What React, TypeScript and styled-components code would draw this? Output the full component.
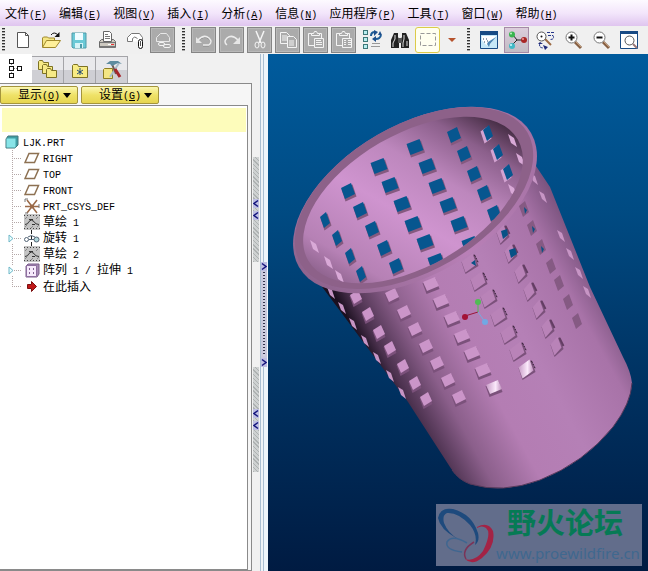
import React from 'react';
import styled, { createGlobalStyle, css } from 'styled-components';

const Global = createGlobalStyle`
  * { box-sizing: border-box; }
  html, body, #root { margin: 0; height: 100%; }
  body {
    font-family: "Noto Sans CJK SC", sans-serif;
    font-size: 12px;
    line-height: 16px;
    color: #000;
    background: #f1f1f1;
    overflow: hidden;
  }
  button { font: inherit; color: inherit; padding: 0; border: 0; background: none; }
  svg { display: block; }
`;

const Page = styled.div`
  display: flex;
  flex-direction: column;
  min-height: 100vh;
`;

/* ---------- text ---------- */

const Latin = styled.span`
  font-family: "Liberation Mono", monospace;
  font-size: 10px;
  white-space: pre;
`;

const Label = ({ text }: { text: string }) => (
  <span>
    {text.split(/([\x20-\x7e]+)/).filter(Boolean).map((part, i) =>
      /^[\x20-\x7e]/.test(part) ? <Latin key={i}>{part}</Latin> : part
    )}
  </span>
);

const Hotkey = ({ text, letter }: { text: string; letter: string }) => (
  <span>
    {text}
    <Latin>(<u>{letter}</u>)</Latin>
  </span>
);

/* ---------- menu ---------- */

const MenuBar = styled.nav`
  display: flex;
  align-items: center;
  gap: 12px;
  height: 26px;
  padding: 2px 5px 0;
  background: linear-gradient(#fdfaff, #f3e6fb 50%, #dfc5ef);
`;

const MenuItem = styled.button`
  flex: none;
  white-space: nowrap;
`;

const menus = [
  ['文件', 'F'], ['编辑', 'E'], ['视图', 'V'], ['插入', 'I'], ['分析', 'A'],
  ['信息', 'N'], ['应用程序', 'P'], ['工具', 'T'], ['窗口', 'W'], ['帮助', 'H'],
];

/* ---------- toolbar ---------- */

const ToolBar = styled.div`
  display: flex;
  align-items: center;
  gap: 3px;
  height: 28px;
  overflow: hidden;
  background: #f0f0f0;
`;

const Grip = styled.span<{ $first?: boolean }>`
  flex: none;
  width: ${(p) => (p.$first ? 7 : 10)}px;
  height: 24px;
  background: repeating-linear-gradient(#333 0 1px, #aaa 1px 2px, #f0f0f0 2px 3px) center / 3px 100% no-repeat;
`;

type Look = 'plain' | 'disabled' | 'pressed' | 'select' | 'arrow';

const looks = {
  plain: css``,
  disabled: css`background: #ababab; border: 1px solid #858585; box-shadow: inset 0 0 0 1px #b9b9b9;`,
  pressed: css`background: linear-gradient(#dccddc, #c2bcc4); border: 1px solid #a58aa6;`,
  select: css`background: #fffff0; border: 1px solid #dccb48; border-radius: 3px;`,
  arrow: css`width: 17px;`,
};

const Tool = styled.button<{ $look: Look }>`
  display: flex;
  flex: none;
  align-items: center;
  justify-content: center;
  width: 25px;
  height: 26px;
  ${(p) => looks[p.$look]}
`;

const Icon = ({ size = 20, h, children }: { size?: number; h?: number; children: React.ReactNode }) => (
  <svg width={size} height={h ?? size} viewBox={`0 0 ${size} ${h ?? size}`} fill="none" aria-hidden="true">
    {children}
  </svg>
);

const NewIcon = () => (
  <Icon><path d="M4.500 2.500h8l3 3v12h-11z" fill="#fff" stroke="#555" /><path d="M12.500 2.500v3h3" stroke="#555" /></Icon>
);
const OpenIcon = () => (
  <Icon>
    <path d="M1.500 17v-9l1-1h4l1 1h6v3" fill="#f4e684" stroke="#a0892c" />
    <path d="M1.500 17.500l4-7h14l-5 7z" fill="#fff09a" stroke="#a0892c" />
    <path d="M10 5q3-4 7 0" stroke="#111" /><path d="M18.500 2v5h-5z" fill="#111" />
  </Icon>
);
const SaveIcon = () => (
  <Icon>
    <path d="M3 3h14v15H4l-1-1z" fill="#6bc9d6" stroke="#4f9ba8" />
    <path d="M6 3h8v7H6z" fill="#eefcff" /><path d="M6 13h8v5H6z" fill="#d6f3f7" /><path d="M11 14h2v4h-2z" fill="#4f9ba8" />
  </Icon>
);
const PrintIcon = () => (
  <Icon>
    <path d="M2.500 11.500l2-2h12l2 2v6h-16z" fill="#cdc9c0" stroke="#6a6a6a" />
    <path d="M6.500 1.500h6l2 2v8h-8z" fill="#fff" stroke="#666" />
    <path d="M8 4.500h3M8 6.500h5M8 8.500h5" stroke="#777" />
    <path d="M3 12.500h15" stroke="#777" /><path d="M3 16h15v2H3z" fill="#777" /><path d="M11 14.500h3" stroke="#fff" /><path d="M14 14.500h3" stroke="#e33" />
  </Icon>
);
const MailIcon = () => (
  <Icon>
    <path d="M2.500 11.500v-4l4-4h8l3 4v4" fill="#fff" stroke="#777" />
    <path d="M2.500 11.500h5v-3q2-3 5 0" stroke="#777" />
    <rect x="13.500" y="9.500" width="4" height="9" rx="2" fill="#fff" stroke="#111" /><path d="M15.500 11v5" stroke="#555" />
  </Icon>
);
const MailLinkIcon = () => (
  <Icon>
    <path d="M3.500 11.500v-4l4-4h6l3 4v4z" stroke="#e8e8e8" />
    <rect x="5.500" y="12.500" width="6" height="3" rx="1.500" stroke="#f4f4f4" />
    <rect x="10.500" y="14.500" width="7" height="3" rx="1.500" stroke="#f4f4f4" />
  </Icon>
);
const UndoIcon = () => (
  <Icon><path d="M4 11q6-6 11-2q4 4 0 7H9" stroke="#888" /><path d="M4 10q6-6 11-2q4 4 0 7H9" stroke="#ececec" strokeWidth="1.500" /><path d="M2 7v6h6z" fill="#e6e6e6" /></Icon>
);
const RedoIcon = () => (
  <Icon><path d="M16 10q-6-6-11-2q-4 4 0 7" stroke="#ececec" strokeWidth="1.500" /><path d="M18 7v7h-7z" fill="#e6e6e6" /></Icon>
);
const CutIcon = () => (
  <Icon><path d="M6 1l5 12M14 1L9 13" stroke="#f4f4f4" strokeWidth="1.500" /><ellipse cx="7" cy="15" rx="2" ry="3" stroke="#f4f4f4" /><ellipse cx="13" cy="15" rx="2" ry="3" stroke="#f4f4f4" /></Icon>
);
const CopyIcon = () => (
  <Icon>
    <path d="M2.500 2.500h6l3 3v8h-9zM4 6h5M4 8h5M4 10h5" stroke="#f4f4f4" />
    <path d="M9.500 6.500h6l3 3v8h-9z" fill="#ababab" stroke="#f4f4f4" /><path d="M11 11h5M11 13h5M11 15h5" stroke="#f4f4f4" />
  </Icon>
);
const PasteIcon = ({ list = false }: { list?: boolean }) => (
  <Icon>
    <path d="M2.500 3.500h13v12h-13z" stroke="#f4f4f4" /><path d="M5.500 5.500v-2h2l1-2h2l1 2h2v2z" fill="#ababab" stroke="#f4f4f4" />
    <path d="M8.500 8.500h9v9h-9z" fill="#ababab" stroke="#f4f4f4" />
    <path d={list ? 'M10 10.500h2M14 10.500h3M10 12.500h2M14 12.500h3M10 14.500h2M14 14.500h3' : 'M10 10.500h5M10 12.500h6M10 14.500h6'} stroke="#f4f4f4" />
  </Icon>
);
const RegenIcon = () => (
  <Icon>
    {[0, 7, 14].map((y) => <rect key={y} x="1.500" y={y + 0.5} width="4" height="4" fill="#b8eef0" stroke="#3d7778" />)}
    <path d="M9 6q0-4 4-4M19 5q-1 4-5 4" stroke="#1d5b96" strokeWidth="2" /><path d="M12 0l4 2-4 4zM14 6v6l-4-3zM16 5h4l-2-4z" fill="#1d4f8c" />
    <path d="M10 13.500h8M9 16.500h9" stroke="#999" />
  </Icon>
);
const FindIcon = () => (
  <Icon>
    <path d="M4 3h4v4l1 2v9H1v-8zM12 3h4l3 7v8h-8V9l1-2z" fill="#222" /><path d="M8 8h4v5H8z" fill="#555" />
    <path d="M5 5v4l-2 4v4M14 5v4l-1 4v4M17 11v5" stroke="#ddd" />
  </Icon>
);
const SelectIcon = () => <Icon><path d="M2.500 3.500h15v12h-15z" stroke="#999" strokeDasharray="4 2" /></Icon>;
const ArrowIcon = () => <Icon size={8}><path d="M0 2h8L4 6z" fill="#b6532c" /></Icon>;
const RedrawIcon = () => (
  <Icon>
    <path d="M1.500 1.500h17v17h-17z" fill="#c6e8f8" stroke="#174a84" /><path d="M1 1h18v4H1z" fill="#174a84" />
    <path d="M3 6h14l-7 10q-4-1-7-6z" fill="#fff" /><path d="M17 7l-6 7-1 3-2-3 1-2z" fill="#4b86b5" />
    <path d="M4 9h1M7 9h1M5 12h1M8 11h1" stroke="#246" />
  </Icon>
);
const SpinIcon = () => (
  <Icon>
    <path d="M6 5l4 5h8M10 10l-5 5" stroke="#222" />
    <circle cx="5" cy="4.500" r="3" fill="#39b54f" /><circle cx="17" cy="10" r="3" fill="#a92626" /><circle cx="5" cy="16" r="3" fill="#41b9c6" />
    <circle cx="4" cy="3.500" r="1" fill="#bff5c4" /><circle cx="16" cy="9" r="1" fill="#ef9b9b" /><circle cx="4" cy="15" r="1" fill="#d0fbff" />
  </Icon>
);
const OrientIcon = () => (
  <Icon>
    <path d="M10 9l6 6" stroke="#9c6b45" strokeWidth="2" /><circle cx="6.500" cy="6.500" r="4.500" fill="#fff" stroke="#555" /><circle cx="6.500" cy="6.500" r="1" fill="#111" />
    <path d="M12 2.500h7M13 5.500h5q2 4-3 4M5 13q-2 5 4 5" stroke="#25358a" strokeDasharray="3 1" /><path d="M8 15l5 2-3 3zM5 12l3 2H3z" fill="#1d2877" />
  </Icon>
);
const Lens = ({ children }: { children?: React.ReactNode }) => (
  <g>
    <path d="M12 12l6 6" stroke="#866044" strokeWidth="3" /><path d="M12 11l6 6" stroke="#c29b78" />
    <circle cx="8.500" cy="7.500" r="5.500" fill="#fff" stroke="#777" />{children}
  </g>
);
const ZoomInIcon = () => <Icon><Lens><path d="M5.500 7.500h6M8.500 4.500v6" stroke="#111" strokeWidth="2" /></Lens></Icon>;
const ZoomOutIcon = () => <Icon><Lens><path d="M5.500 7.500h6" stroke="#111" strokeWidth="2" /></Lens></Icon>;
const RefitIcon = () => (
  <Icon>
    <path d="M1.500 1.500h17v17h-17z" fill="#fff" stroke="#174a84" /><path d="M1 1h18v3H1z" fill="#174a84" />
    <path d="M14 14l4 4" stroke="#977" strokeWidth="2" /><circle cx="10.500" cy="10.500" r="4.500" fill="#fff" stroke="#555" />
  </Icon>
);
const PageIcon = () => <Icon><path d="M1 6h12v11H1z" fill="#aaa" /></Icon>;

const group1: [string, React.ReactNode, Look][] = [
  ['新建', <NewIcon />, 'plain'], ['打开', <OpenIcon />, 'plain'], ['保存', <SaveIcon />, 'plain'],
  ['打印', <PrintIcon />, 'plain'], ['发送邮件', <MailIcon />, 'plain'], ['发送链接', <MailLinkIcon />, 'disabled'],
];
const group2: [string, React.ReactNode, Look][] = [
  ['撤消', <UndoIcon />, 'disabled'], ['重做', <RedoIcon />, 'disabled'], ['剪切', <CutIcon />, 'disabled'],
  ['复制', <CopyIcon />, 'disabled'], ['粘贴', <PasteIcon />, 'disabled'], ['选择性粘贴', <PasteIcon list />, 'disabled'],
  ['再生', <RegenIcon />, 'plain'], ['查找', <FindIcon />, 'plain'], ['选取框', <SelectIcon />, 'select'], ['选取方式', <ArrowIcon />, 'arrow'],
];
const group3: [string, React.ReactNode, Look][] = [
  ['重画', <RedrawIcon />, 'plain'], ['旋转中心', <SpinIcon />, 'pressed'], ['定向模式', <OrientIcon />, 'plain'],
  ['放大', <ZoomInIcon />, 'plain'], ['缩小', <ZoomOutIcon />, 'plain'], ['重新调整', <RefitIcon />, 'plain'], ['视图列表', <PageIcon />, 'plain'],
];

const Tools = ({ items }: { items: [string, React.ReactNode, Look][] }) => (
  <>
    {items.map(([name, icon, look]) => (
      <Tool key={name} aria-label={name} $look={look} disabled={look === 'disabled'}>{icon}</Tool>
    ))}
  </>
);

/* ---------- navigator ---------- */

const Body = styled.div`
  display: flex;
  flex: 1;
  min-height: 0;
`;

const Navigator = styled.aside`
  display: flex;
  flex: none;
  flex-direction: column;
  width: 252px;
`;

const Tabs = styled.div`
  display: flex;
  align-items: flex-end;
  height: 29px;
`;

const Tab = styled.button<{ $active?: boolean }>`
  display: flex;
  align-items: center;
  justify-content: center;
  width: 32px;
  height: ${(p) => (p.$active ? 29 : 27)}px;
  background: ${(p) => (p.$active ? '#fff' : 'linear-gradient(#e9e9ec 50%, #cfcfd4 50%)')};
  border: 1px solid ${(p) => (p.$active ? '#fff' : '#a4a4a8')};
  border-left: 0;
  border-bottom: 0;
`;

const Panel = styled.div`
  display: flex;
  flex: 1;
  flex-direction: column;
  padding: 2px 3px 0 0;
  background: #f6f6f6;
  border: 1px solid #8a8a8a;
  border-left: 0;
`;

const ButtonRow = styled.div`
  display: flex;
  gap: 3px;
  padding-bottom: 1px;
`;

const DropButton = styled.button`
  display: flex;
  align-items: center;
  justify-content: flex-end;
  gap: 3px;
  width: 78px;
  height: 18px;
  padding-right: 6px;
  background: linear-gradient(#fbf7b0, #efe268 50%, #e6d551);
  border: 1px solid #a4953c;
  border-radius: 2px;
`;

const TreeBox = styled.div`
  flex: 1;
  padding: 2px 1px 2px 2px;
  background: #fff;
  border: 1px solid #8a8a8a;
  border-left: 0;
`;

const Banner = styled.div`
  height: 24px;
  background: #fdfcbb;
`;

const Tree = styled.ul`
  margin: 0;
  padding: 2px 0 0;
  list-style: none;
`;

const Row = styled.li`
  display: flex;
  align-items: center;
  height: 16px;
`;

const RootIcon = styled.span`
  width: 21px;
  padding-left: 3px;
`;

const Guide = styled.span<{ $last?: boolean }>`
  display: flex;
  align-items: center;
  flex: none;
  width: 22px;
  height: 16px;
  padding-left: 6px;
  background:
    repeating-linear-gradient(#b4a7a7 0 1px, transparent 1px 2px) 10px 0 / 1px ${(p) => (p.$last ? '9px' : '100%')} no-repeat,
    repeating-linear-gradient(90deg, #b4a7a7 0 1px, transparent 1px 2px) 10px 8px / 10px 1px no-repeat;
`;

const Expander = styled.button`
  background: #fff;
`;

const NodeIcon = styled.span`
  flex: none;
  width: 19px;
`;

const PlaneIcon = () => <Icon size={16}><path d="M5 3.500h9.500l-4 9H1z" fill="#fff" stroke="#8d7152" strokeWidth="1.500" /></Icon>;
const CsysIcon = () => (
  <Icon size={16}>
    <path d="M1 8.500h14M3 2l10 13M13 2L3 15" stroke="#9b6a48" strokeWidth="1.500" /><circle cx="8" cy="8.500" r="2" fill="#9b6a48" />
    <path d="M1 4V1h3M1 15h3M15 6v4" stroke="#777" />
  </Icon>
);
const SketchIcon = () => (
  <Icon size={16}>
    <path d="M0 0h16v16H0z" fill="#c4c4c4" /><path d="M0 1.500h16M0 14.500h16" stroke="#444" strokeDasharray="1 2" />
    <path d="M1 13L3 11M7 14l2-2M13 13l2-2M1 5l2-2M12 5l2-2" stroke="#888" />
    <path d="M1 10.500q3 0 4-3q2-3 5 0q1 3 5 3M5 5.500h4M8 10.500h3" stroke="#333" />
  </Icon>
);
const RevolveIcon = () => (
  <Icon size={16}>
    <path d="M7.500 0v16" stroke="#222" strokeDasharray="4 2" /><circle cx="2.500" cy="9.500" r="2" fill="#fff" stroke="#567" />
    <circle cx="12.500" cy="9.500" r="2.500" fill="#aed5d8" stroke="#567" /><path d="M4 7q3-3 7 0M5 9.500h5" stroke="#567" />
  </Icon>
);
const PatternIcon = () => (
  <Icon size={16}>
    <path d="M2 4l2-2h11v10l-2 3H2z" fill="#a58bb4" stroke="#7c618c" /><path d="M2.500 3.500h10v11h-10z" fill="#f6eafb" stroke="#8f6fa0" />
    <path d="M5 6h1v2H5zM9 6h1v2H9zM5 10h1v2H5zM9 10h1v2H9z" fill="#806090" />
  </Icon>
);
const InsertIcon = () => <Icon size={16}><path d="M3.500 6.500h4v-3l5 5-5 5v-3h-4z" fill="#c01818" stroke="#7c1010" /></Icon>;

const nodes: { label: string; icon: React.ReactNode; open?: boolean }[] = [
  { label: 'RIGHT', icon: <PlaneIcon /> }, { label: 'TOP', icon: <PlaneIcon /> }, { label: 'FRONT', icon: <PlaneIcon /> },
  { label: 'PRT_CSYS_DEF', icon: <CsysIcon /> }, { label: '草绘 1', icon: <SketchIcon /> },
  { label: '旋转 1', icon: <RevolveIcon />, open: true }, { label: '草绘 2', icon: <SketchIcon /> },
  { label: '阵列 1 / 拉伸 1', icon: <PatternIcon />, open: true }, { label: '在此插入', icon: <InsertIcon /> },
];

const Folder = ({ x, y }: { x: number; y: number }) => (
  <path d={`M${x}.500 ${y + 9}.500v-8l1-1h3l1 2h5v7z`} fill="#f6ea86" stroke="#7d7224" />
);

/* ---------- splitter ---------- */

const Splitter = styled.div`
  display: flex;
  flex: none;
  width: 16px;
`;

const Rail = styled.div<{ $inner?: boolean }>`
  display: flex;
  flex-direction: column;
  align-items: center;
  justify-content: center;
  gap: 105px;
  width: 8px;
  padding-top: 3px;
  background: ${(p) => (p.$inner ? 'linear-gradient(90deg, #a9bfd2 0 1px, #eef3f7 1px 3px, #a9bfd2 3px 4px, #edf5fb 4px)' : '#f1f1f1')};
`;

const Handle = styled.button<{ $inner?: boolean }>`
  display: flex;
  flex-direction: column;
  align-items: center;
  justify-content: ${(p) => (p.$inner ? 'space-between' : 'center')};
  gap: 3px;
  width: 6px;
  height: 105px;
  background: ${(p) =>
    p.$inner
      ? 'repeating-linear-gradient(#33334d 0 1px, #d2d2e2 1px 3px) center / 2px 84px no-repeat, #c9c9dd'
      : 'repeating-linear-gradient(45deg, #aeb2b2 0 1px, #cfd2d2 1px 3px)'};
`;

const Chevron = ({ right = false }: { right?: boolean }) => (
  <svg width="6" height="9" viewBox="0 0 6 9" fill="none" aria-hidden="true">
    <path d="M0 0h6v9H0z" fill="#bebee2" /><path d={right ? 'M1 1.500l4 3-4 3' : 'M5 1.500l-4 3 4 3'} stroke="#15157c" strokeWidth="1.500" />
  </svg>
);

/* ---------- model view ---------- */

const Viewport = styled.main`
  position: relative;
  flex: 1;
  min-width: 0;
  background: linear-gradient(#005b9d, #004b83 30%, #00305f 66%, #001b42);
`;

const Scene = styled.svg`
  width: 100%;
  height: 100%;
`;

type P = [number, number];
const windows: { w: number; pts: P[] }[] = [
  { w: 9, pts: [[325, 220], [337, 238], [350, 256], [361, 274]] },
  { w: 13, pts: [[348, 191], [360, 210], [372, 229], [384, 248], [396, 266]] },
  { w: 16, pts: [[379, 166], [390, 185], [402, 204], [413, 224], [425, 242], [436, 261]] },
  { w: 16, pts: [[415, 147], [427, 166], [437, 186], [448, 205], [459, 224], [470, 244]] },
  { w: 13, pts: [[454, 135], [464, 154], [474, 174], [484, 193], [494, 213]] },
  { w: 9, pts: [[488, 133], [498, 152], [508, 172]] },
];
const slivers: P[] = [[512, 141], [520, 160], [512, 191], [314, 247], [328, 263], [339, 277]];

type Kind = 'edge' | 'lit' | 'deep' | 'dark';
const pockets: { w: number; kind: Kind; pts: P[] }[] = [
  { w: 6, kind: 'edge', pts: [[331, 293], [342, 308], [353, 324], [365, 341], [377, 358], [390, 376], [402, 393]] },
  { w: 11, kind: 'lit', pts: [[356, 298], [368, 315], [379, 333], [390, 349], [403, 367], [415, 384], [426, 400]] },
  { w: 13, kind: 'lit', pts: [[392, 296], [404, 313], [415, 330], [426, 347], [437, 364], [448, 381], [459, 398]] },
  { w: 15, kind: 'lit', pts: [[431, 285], [441, 302], [452, 319], [462, 337], [472, 354], [483, 371], [494, 388]] },
  { w: 15, kind: 'deep', pts: [[470, 264], [479, 282], [489, 299], [499, 317], [509, 335], [518, 352], [527, 370]] },
  { w: 11, kind: 'deep', pts: [[503, 235], [511, 254], [521, 274], [530, 292], [539, 310], [548, 329], [557, 347]] },
  { w: 8, kind: 'dark', pts: [[524, 209], [532, 228], [541, 247], [551, 266], [559, 283], [568, 302], [577, 321]] },
  { w: 5, kind: 'edge', pts: [[534, 179], [543, 197], [561, 236], [570, 254], [579, 273], [587, 292]] },
];

/* A tilted opening: its top edge rises to the right and its foot is pushed right. */
const quad = (x: number, y: number, w: number, h: number, lean = 5, push = 4) => {
  const a = w / 2;
  const b = h / 2;
  const l = lean / 2;
  return `M${x - a} ${y - b + l}L${x + a - push} ${y - b - l}L${x + a} ${y + b - l}L${x - a + push} ${y + b + l}Z`;
};

const Pocket = ({ x, y, w, kind, last }: { x: number; y: number; w: number; kind: Kind; last: boolean }) => {
  if (kind === 'edge') return <path d={`M${x - 4} ${y - 6}l5 3 3 9-5-4z`} fill="#c795c5" />;
  if (kind === 'dark') return <path d={quad(x, y, w + 2, 11, 5)} fill="#855a83" />;
  const shiny = last && w === 15;
  if (kind === 'deep') {
    return (
      <g>
        <path d={quad(x, y, w + 2, 12, 8)} fill="#7b517b" />
        <path d={quad(x - 1, y - 1, w, 11, 8)} fill={shiny ? 'url(#shine)' : '#b983b8'} />
        <path
          d={`M${x + w / 2 - 3} ${y - 9}l4 8`}
          stroke={w === 15 ? '#2c192e' : '#633d63'}
          strokeWidth={w === 15 ? 1 : 2}
          strokeDasharray={w === 15 ? '2 1' : undefined}
        />
      </g>
    );
  }
  return (
    <g>
      <path d={quad(x, y + 1, w + 2, 11, 5)} fill="#7b517b" />
      <path d={quad(x, y - 1, w + 1, 9, 5)} fill={shiny ? 'url(#shine)' : '#cb95c9'} />
    </g>
  );
};

const Basket = () => (
  <Scene viewBox="268 54 380 517" preserveAspectRatio="xMidYMid meet" role="img" aria-label="LJK.PRT">
    <defs>
      <linearGradient id="wall" gradientUnits="userSpaceOnUse" x1="376" y1="371" x2="590" y2="254">
        <stop offset="0" stopColor="#1b101f" /><stop offset=".06" stopColor="#4b314e" /><stop offset=".2" stopColor="#8b5f8b" />
        <stop offset=".38" stopColor="#b47db3" /><stop offset=".6" stopColor="#b580b6" /><stop offset=".85" stopColor="#a873a8" /><stop offset="1" stopColor="#76507a" />
      </linearGradient>
      <linearGradient id="inside" gradientUnits="userSpaceOnUse" x1="305" y1="260" x2="524" y2="134">
        <stop offset="0" stopColor="#7e577e" /><stop offset=".16" stopColor="#b681b5" /><stop offset=".42" stopColor="#cf94cf" />
        <stop offset=".62" stopColor="#bd87bd" /><stop offset=".8" stopColor="#8b5f8b" /><stop offset=".92" stopColor="#4a3049" /><stop offset="1" stopColor="#1f1421" />
      </linearGradient>
      <linearGradient id="lip" gradientUnits="userSpaceOnUse" x1="300" y1="260" x2="530" y2="180">
        <stop offset="0" stopColor="#8f648e" /><stop offset=".5" stopColor="#b980b7" /><stop offset="1" stopColor="#a471a3" />
      </linearGradient>
      <linearGradient id="shine"><stop offset="0" stopColor="#c79ac6" /><stop offset=".6" stopColor="#fbe9fb" /><stop offset="1" stopColor="#be8cbc" /></linearGradient>
      <clipPath id="mouth"><ellipse cx="413" cy="200" rx="121" ry="66" transform="rotate(-30 413 200)" /></clipPath>
    </defs>
    <path
      d="M314 276L408 402L450 467Q458 480 470 484Q502 494 540 480Q584 463 613 427Q631 403 632 383Q631 372 623 357L590 287L550 187L532 160Z"
      fill="url(#wall)"
    />
    <path d="M452 470Q459 480 470 484Q502 494 540 480Q584 463 613 427Q631 403 632 383" stroke="#55395a" fill="none" />
    {pockets.map(({ w, kind, pts }) =>
      pts.map(([x, y], i) => <Pocket key={`${x}-${y}`} x={x} y={y} w={w} kind={kind} last={i === pts.length - 1} />)
    )}
    <path d="M501 231l6-2 1 6-5 4zM509 250l6-2 2 6-6 4zM524 207l3 3-2 4zM532 226l3 3-2 4zM541 246l3 3-2 4zM471 263l4-3 1 6z" fill="#075185" />
    <ellipse cx="415" cy="200" rx="134" ry="75" transform="rotate(-30 415 200)" fill="url(#lip)" />
    <ellipse cx="414" cy="198" rx="131" ry="73" transform="rotate(-30 414 198)" fill="#8d6189" />
    <ellipse cx="413" cy="200" rx="121" ry="66" transform="rotate(-30 413 200)" fill="url(#inside)" />
    <g clipPath="url(#mouth)">
      {slivers.map(([x, y]) => <path key={x + y} d={`M${x - 4} ${y - 7}l6 4 3 9-6-4z`} fill="#d9a9d7" />)}
      {windows.map(({ w, pts }, c) =>
        pts.map(([x, y]) => (
          <g key={`${x}-${y}`}>
            <path d={quad(x + (c === 5 ? -2 : 1), y + 2, w + 2, 12)} fill={c === 5 ? '#d2a2d1' : '#85597f'} />
            <path d={quad(x, y, w + 1, 11)} fill="#07568f" />
          </g>
        ))
      )}
    </g>
    <path d="M478 312L465 316" stroke="#9a1638" /><path d="M478 312V303" stroke="#52b955" /><path d="M478 312L485 322" stroke="#79a9e0" />
    <circle cx="465" cy="317" r="3" fill="#a31336" /><circle cx="478" cy="302" r="3" fill="#50bd54" /><circle cx="485" cy="322" r="3" fill="#72a8e4" />
  </Scene>
);

const Watermark = styled.div`
  position: absolute;
  right: 6px;
  bottom: 5px;
  display: flex;
  align-items: center;
  width: 206px;
  height: 62px;
  background: #626d8b;
`;

const Brand = styled.div`
  display: flex;
  flex-direction: column;
  align-items: center;
  flex: 1;
`;

const BrandName = styled.strong`
  font-family: "Liberation Sans", "Noto Sans CJK SC", sans-serif;
  font-size: 29px;
  line-height: 36px;
  font-weight: 700;
  padding-right: 6px;
  color: #067a55;
`;

const BrandUrl = styled.span`
  font-family: "Noto Sans", sans-serif;
  font-size: 15px;
  line-height: 22px;
  color: #3f688f;
`;

export default function App() {
  return (
    <Page>
      <Global />
      <MenuBar>
        {menus.map(([text, letter]) => <MenuItem key={letter}><Hotkey text={text} letter={letter} /></MenuItem>)}
      </MenuBar>
      <ToolBar role="toolbar">
        <Grip $first />
        <Tools items={group1} />
        <Grip />
        <Tools items={group2} />
        <Grip />
        <Tools items={group3} />
      </ToolBar>
      <Body>
        <Navigator>
          <Tabs role="tablist">
            <Tab $active role="tab" aria-selected="true" aria-label="模型树">
              <Icon><path d="M5.500 1v17M6 9.500h7" stroke="#888" strokeDasharray="1 1" />{[[3, 1], [3, 8], [3, 15], [11, 8]].map(([x, y]) => <rect key={x + y * 20} x={x + 0.5} y={y - 0.5} width="4" height="4" fill="#fff" stroke="#111" />)}</Icon>
            </Tab>
            <Tab role="tab" aria-label="文件夹浏览器"><Icon><Folder x={0} y={0} /><Folder x={4} y={4} /><Folder x={8} y={8} /></Icon></Tab>
            <Tab role="tab" aria-label="收藏夹">
              <Icon><path d="M2.500 17.500v-12l1-1h4l1 2h9v11z" fill="#f8ec84" stroke="#7d7224" /><path d="M10 8v7M7 10l6 4M13 10l-6 4" stroke="#234c78" /></Icon>
            </Tab>
            <Tab role="tab" aria-label="连接">
              <Icon><path d="M1.500 18.500v-9l1-1h8v10z" fill="#f4e684" stroke="#8d7d24" /><path d="M17 3L8 17" stroke="#a8bcc8" strokeWidth="2" /><path d="M10 4l4 10" stroke="#6d5a54" strokeWidth="2" /><path d="M4 4l4-3h8l4 3-4-1-6 3-2-2z" fill="#5e8c9f" /><path d="M13 9l5 8" stroke="#a5242a" strokeWidth="3" /></Icon>
            </Tab>
          </Tabs>
          <Panel>
            <ButtonRow>
              {[['显示', 'O'], ['设置', 'G']].map(([text, letter]) => (
                <DropButton key={letter}>
                  <Hotkey text={text} letter={letter} />
                  <svg width="8" height="5" viewBox="0 0 8 5" aria-hidden="true"><path d="M0 0h8L4 5z" /></svg>
                </DropButton>
              ))}
            </ButtonRow>
            <TreeBox>
              <Banner />
              <Tree>
                <Row>
                  <RootIcon>
                    <Icon size={14}><path d="M1 4l2-3h10v9l-3 3H1z" fill="#3f9fa5" stroke="#47777c" /><path d="M1.500 3.500h9v9h-9z" fill="#88e4e8" /></Icon>
                  </RootIcon>
                  <Label text="LJK.PRT" />
                </Row>
                {nodes.map(({ label, icon, open }, i) => (
                  <Row key={label}>
                    <Guide $last={i === nodes.length - 1}>
                      {open && (
                        <Expander aria-label="展开">
                          <svg width="6" height="9" viewBox="0 0 6 9" aria-hidden="true"><path d="M1 1v7l4-3.500z" fill="#e9ffff" stroke="#6fb7c8" /></svg>
                        </Expander>
                      )}
                    </Guide>
                    <NodeIcon>{icon}</NodeIcon>
                    <Label text={label} />
                  </Row>
                ))}
              </Tree>
            </TreeBox>
          </Panel>
        </Navigator>
        <Splitter>
          <Rail>
            <Handle aria-label="折叠导航器"><Chevron /><Chevron /></Handle>
            <Handle aria-label="折叠面板"><Chevron /><Chevron /></Handle>
          </Rail>
          <Rail $inner>
            <Handle $inner aria-label="展开浏览器"><Chevron right /><Chevron right /></Handle>
          </Rail>
        </Splitter>
        <Viewport>
          <Basket />
          <Watermark>
            <svg width="58" height="60" viewBox="0 0 58 60" fill="none" aria-hidden="true">
              <path d="M20 33Q4 24 2 13Q4 2 17 4Q36 9 42 28Q44 36 39 40Q42 30 34 20Q22 7 11 8Q6 10 8 18Q12 28 22 34Z" fill="#1e4a7d" />
              <path d="M41 22Q52 16 57 26Q60 41 46 53Q36 61 29 54Q39 57 47 46Q56 28 50 23Q46 20 41 23Z" fill="#a32345" />
              <path d="M31 38Q16 29 11 37Q9 45 26 47" stroke="#3f6690" strokeWidth="1.500" />
              <path d="M38 37Q25 45 30 54" stroke="#7b3458" strokeWidth="1.500" />
            </svg>
            <Brand>
              <BrandName>野火论坛</BrandName>
              <BrandUrl>www.proewildfire.cn</BrandUrl>
            </Brand>
          </Watermark>
        </Viewport>
      </Body>
    </Page>
  );
}
